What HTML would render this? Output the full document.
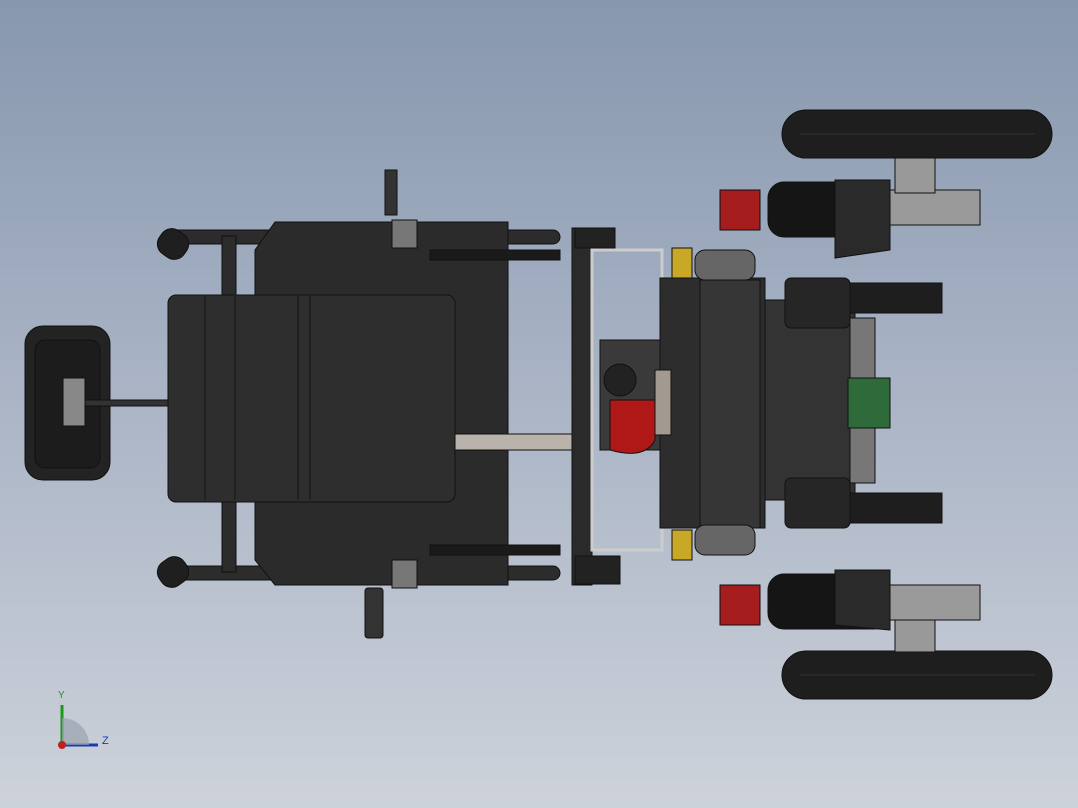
<!DOCTYPE html>
<html><head><style>
html,body{margin:0;padding:0;width:1078px;height:808px;overflow:hidden}
body{background:linear-gradient(#8797ae 0%,#a7b2c4 45%,#cdd2da 100%);font-family:"Liberation Sans",sans-serif}
</style></head><body>
<svg width="1078" height="808" viewBox="0 0 1078 808" xmlns="http://www.w3.org/2000/svg">
<g stroke="#111" stroke-width="1">
<!-- headrest -->
<rect x="25" y="326" width="85" height="154" rx="18" fill="#232323"/>
<rect x="35" y="340" width="65" height="128" rx="10" fill="#1c1c1c"/>
<rect x="63" y="378" width="22" height="48" fill="#888"/>
<rect x="85" y="400" width="85" height="6" fill="#333"/>
<!-- armrest tubes -->
<rect x="170" y="230" width="390" height="14" rx="7" fill="#2c2c2c"/>
<rect x="170" y="566" width="390" height="14" rx="7" fill="#2c2c2c"/>
<rect x="222" y="236" width="14" height="64" fill="#2c2c2c"/>
<rect x="222" y="500" width="14" height="72" fill="#2c2c2c"/>
<rect x="158" y="230" width="30" height="28" rx="12" fill="#1f1f1f" transform="rotate(35 173 244)"/>
<rect x="158" y="558" width="30" height="28" rx="12" fill="#1f1f1f" transform="rotate(-35 173 572)"/>
<!-- backrest/base -->
<path d="M275 222 L508 222 L508 585 L275 585 L255 560 L255 250 Z" fill="#2b2b2b"/>
<!-- seat -->
<rect x="168" y="295" width="287" height="207" rx="8" fill="#2e2e2e"/>
<line x1="205" y1="296" x2="205" y2="500"/><line x1="235" y1="296" x2="235" y2="500"/>
<line x1="298" y1="296" x2="298" y2="500"/><line x1="310" y1="296" x2="310" y2="500"/>
<!-- handle rods -->
<rect x="430" y="250" width="130" height="10" fill="#1a1a1a"/>
<rect x="430" y="545" width="130" height="10" fill="#1a1a1a"/>
<rect x="385" y="170" width="12" height="45" fill="#333"/>
<rect x="365" y="588" width="18" height="50" rx="3" fill="#333"/>
<rect x="392" y="220" width="25" height="28" fill="#777"/>
<rect x="392" y="560" width="25" height="28" fill="#777"/>
<!-- shaft -->
<rect x="455" y="434" width="120" height="16" fill="#b9b3ab"/>
<!-- front bar -->
<rect x="572" y="228" width="20" height="357" fill="#2a2a2a"/>
<rect x="575" y="556" width="45" height="28" fill="#222"/>
<rect x="575" y="228" width="40" height="20" fill="#222"/>
<rect x="592" y="250" width="70" height="300" fill="none" stroke="#ccc" stroke-width="3"/>
<!-- motor module -->
<rect x="660" y="278" width="105" height="250" fill="#2d2d2d"/>
<rect x="700" y="280" width="60" height="248" fill="#363636"/>
<rect x="765" y="300" width="90" height="200" fill="#333"/>
<rect x="600" y="340" width="60" height="110" fill="#3a3a3a"/>
<circle cx="620" cy="380" r="16" fill="#222"/>
<path d="M610 400 h45 v40 q-10 20 -45 10 z" fill="#b01818"/>
<rect x="655" y="370" width="16" height="65" fill="#a39a8f"/>
<!-- springs -->
<rect x="695" y="250" width="60" height="30" rx="10" fill="#666"/>
<rect x="695" y="525" width="60" height="30" rx="10" fill="#666"/>
<rect x="672" y="248" width="20" height="30" fill="#c9a727"/>
<rect x="672" y="530" width="20" height="30" fill="#c9a727"/>
<!-- red blocks -->
<rect x="720" y="190" width="40" height="40" fill="#a51d1d"/>
<rect x="720" y="585" width="40" height="40" fill="#a51d1d"/>
<!-- motors -->
<rect x="768" y="182" width="122" height="55" rx="16" fill="#151515"/>
<rect x="768" y="574" width="122" height="55" rx="16" fill="#151515"/>
<rect x="890" y="190" width="90" height="35" fill="#9a9a9a"/>
<rect x="890" y="585" width="90" height="35" fill="#9a9a9a"/>
<path d="M835 180 h55 v70 l-55 8 z" fill="#2a2a2a"/>
<path d="M835 570 h55 v60 l-55 -5 z" fill="#2a2a2a"/>
<!-- tracks -->
<rect x="785" y="278" width="65" height="50" rx="6" fill="#262626"/>
<rect x="785" y="478" width="65" height="50" rx="6" fill="#262626"/>
<rect x="850" y="283" width="92" height="30" fill="#1e1e1e"/>
<rect x="850" y="493" width="92" height="30" fill="#1e1e1e"/>
<rect x="850" y="318" width="25" height="165" fill="#777"/>
<rect x="848" y="378" width="42" height="50" fill="#2f6b3a"/>
<!-- wheels -->
<rect x="782" y="110" width="270" height="48" rx="24" fill="#1e1e1e"/>
<rect x="782" y="651" width="270" height="48" rx="24" fill="#1e1e1e"/>
<line x1="800" y1="134" x2="1035" y2="134" stroke="#333"/>
<line x1="800" y1="675" x2="1035" y2="675" stroke="#333"/>
<rect x="895" y="158" width="40" height="35" fill="#999"/>
<rect x="895" y="620" width="40" height="32" fill="#999"/>
</g>
<!-- triad -->
<line x1="62" y1="745" x2="62" y2="705" stroke="#1a9a1a" stroke-width="3"/>
<line x1="62" y1="745" x2="98" y2="745" stroke="#1a3ab0" stroke-width="3"/>
<path d="M62 745 L62 718 A27 27 0 0 1 89 745 Z" fill="#9aa3ae" opacity="0.7"/>
<circle cx="62" cy="745" r="4" fill="#c02020"/>
<text x="58" y="698" font-size="10" fill="#1a9a1a">Y</text>
<text x="102" y="744" font-size="11" fill="#1a3ab0">Z</text>
</svg>
</body></html>
